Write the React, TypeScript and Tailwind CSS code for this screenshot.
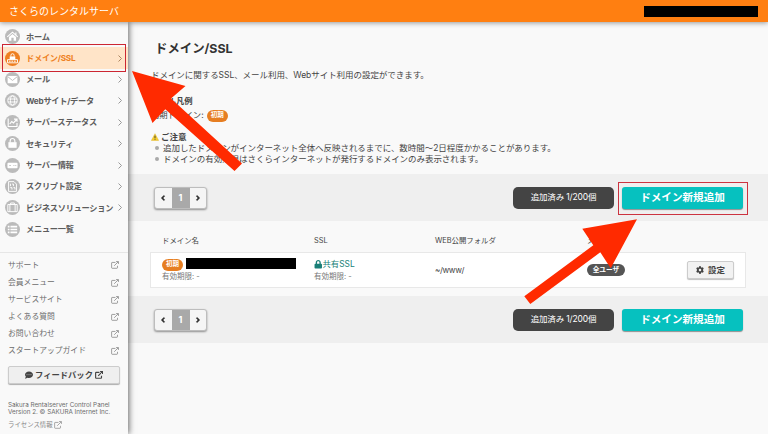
import React from 'react';
import {
  FaAngleLeft,
  FaAngleRight,
  FaCog,
  FaCommentDots,
  FaLock,
} from 'react-icons/fa';

interface MenuItem {
  label: string;
  icon: React.ReactNode;
  arrow?: boolean;
  active?: boolean;
}

const Glyph: React.FC<{ children: React.ReactNode }> = ({ children }) => (
  <svg viewBox="0 0 16 16" className="size-[15px]" fill="none" stroke="#fff" strokeWidth="1">
    {children}
  </svg>
);

const menuItems: MenuItem[] = [
  {
    label: 'ホーム',
    icon: (
      <Glyph>
        <path d="M2.4 8.4 8 3.4l5.6 5M11.6 3.6v2.8" strokeWidth="1.2" />
        <path d="M4.2 8.4 8 5.2l3.8 3.2v4H9.2V9.2H6.8v3.2H4.2z" fill="#fff" stroke="none" />
      </Glyph>
    ),
  },
  {
    label: 'ドメイン/SSL',
    arrow: true,
    active: true,
    icon: (
      <Glyph>
        <path d="M6.3 6V4.6a1.7 1.7 0 0 1 3.4 0V6" />
        <path d="M5 5.8h6v3.4H5z" fill="#fff" stroke="none" />
        <path d="M2.7 9.2h10.6v3.4H2.7z" />
        <path d="M4.2 10.9h7.8" strokeDasharray="1.8 .9" />
      </Glyph>
    ),
  },
  {
    label: 'メール',
    arrow: true,
    icon: (
      <Glyph>
        <path d="M2.8 4.2h10.4v7.8H2.8z" fill="#fff" stroke="none" />
        <path d="m3 5 5 4 5-4" stroke="#bbb" />
      </Glyph>
    ),
  },
  {
    label: 'Webサイト/データ',
    arrow: true,
    icon: (
      <Glyph>
        <circle cx="8" cy="8" r="5" />
        <ellipse cx="8" cy="8" rx="2.2" ry="5" />
        <path d="M3 6.4h10M3 9.6h10" />
      </Glyph>
    ),
  },
  {
    label: 'サーバーステータス',
    arrow: true,
    icon: (
      <Glyph>
        <path d="M3.4 3.8v8.4h9.4V8.4" strokeWidth="1.2" />
        <path d="M5 9.6 7.2 7l1.8 1.5 3.4-3.7M9.6 4.4h3.2v2.8" strokeWidth="1.2" />
      </Glyph>
    ),
  },
  {
    label: 'セキュリティ',
    arrow: true,
    icon: (
      <Glyph>
        <path d="M5.5 7V5.2a2.5 2.5 0 0 1 5 0V7" strokeWidth="1.2" />
        <path d="M3.6 6.6h8.8v6H3.6z" fill="#fff" stroke="none" />
      </Glyph>
    ),
  },
  {
    label: 'サーバー情報',
    arrow: true,
    icon: (
      <Glyph>
        <rect x="2.6" y="5" width="10.8" height="5.8" rx="1" fill="#fff" stroke="none" />
        <path d="M4.6 8h1.6M9 8h1M11 8h1" stroke="#bbb" />
      </Glyph>
    ),
  },
  {
    label: 'スクリプト設定',
    arrow: true,
    icon: (
      <Glyph>
        <path d="M3.8 2.8h5.8L12.2 5.4v7.8H3.8z" />
        <path d="M5.8 5v2.6M7.6 5.4h1.4v2.2M5.6 9.2h1.8v2M9 9.2h1.6v2" />
      </Glyph>
    ),
  },
  {
    label: 'ビジネスソリューション',
    arrow: true,
    icon: (
      <Glyph>
        <path d="M3 4.8h10v7.6H3zM6 4.8V3.2h4v1.6M5.2 4.8v7.6M10.8 4.8v7.6" />
      </Glyph>
    ),
  },
  {
    label: 'メニュー一覧',
    icon: (
      <Glyph>
        <path d="M3 5h1.8M5.8 5H13M3 8h1.8M5.8 8H13M3 11h1.8M5.8 11H13" strokeWidth="1.8" />
      </Glyph>
    ),
  },
];

const supportLinks = [
  'サポート',
  '会員メニュー',
  'サービスサイト',
  'よくある質問',
  'お問い合わせ',
  'スタートアップガイド',
];

const ExternalIcon: React.FC<{ className?: string }> = ({ className }) => (
  <svg viewBox="0 0 9 9" className={`shrink-0 ${className}`} fill="none" stroke="currentColor">
    <path d="M5 1.6H1.3a.6.6 0 0 0-.6.6v5.4c0 .3.3.6.6.6h5.4c.3 0 .6-.3.6-.6V5.4" />
    <path d="M3.6 5.4 8 1M5.7.6h2.7v2.7" />
  </svg>
);

const Pager: React.FC = () => (
  <div className="flex h-[22px] w-[53px] overflow-hidden rounded-[3px] border border-[#bdbdbd] bg-[#f5f5f5] text-[9px] text-[#333] shadow-[0_1px_2px_rgba(0,0,0,0.4)]">
    <div className="flex flex-1 items-center justify-center"><FaAngleLeft size={8} strokeWidth={30} stroke="currentColor" /></div>
    <div className="flex w-[18px] items-center justify-center bg-[#a9a9a9] font-bold text-white">1</div>
    <div className="flex flex-1 items-center justify-center"><FaAngleRight size={8} strokeWidth={30} stroke="currentColor" /></div>
  </div>
);

const ActionBar: React.FC<{ highlighted?: boolean }> = ({ highlighted }) => (
  <div className="flex h-[47px] items-center bg-[#efefef] pr-[25px] pl-[26px]">
    <Pager />
    <div className="ml-auto flex h-[22px] w-[101px] items-center justify-center rounded-[5px] bg-[#444] text-[8.5px] tracking-[-0.15px] text-white">
      追加済み 1/200個
    </div>
    <button className="relative ml-2 h-[22px] w-[121px] rounded-[3px] bg-[#06c1bf] text-[10.6px] leading-[22px] font-bold text-white shadow-[0_1px_1px_rgba(0,0,0,0.4)]">
      ドメイン新規追加
      {highlighted && <span className="absolute -top-[5px] -right-[5px] -bottom-[6px] -left-[4px] border border-[#cc3340]" />}
    </button>
  </div>
);

const Sidebar: React.FC = () => (
  <aside className="relative z-10 flex w-32 shrink-0 flex-col bg-[#f9f9f9] shadow-[1px_0_6px_rgba(0,0,0,0.6)]">
    <nav className="border-b border-[#e6e6e6] pt-1 pb-3">
      {menuItems.map((item) => (
        <div
          key={item.label}
          className={`relative flex h-[21.4px] items-center pr-[6px] pl-[5px] ${item.active ? 'bg-[#ffe4c8] text-[#ee7f20]' : 'text-[#5c5c5c]'}`}
        >
          <span className={`flex size-[15px] shrink-0 items-center justify-center rounded-full ${item.active ? 'bg-[#ee7f20]' : 'bg-[#bbb]'}`}>
            {item.icon}
          </span>
          <span className="ml-[6px] text-[8.2px] font-bold tracking-[-0.25px] whitespace-nowrap">{item.label}</span>
          {item.arrow && (
            <svg viewBox="0 0 4 7" className="ml-auto h-[7px] w-[4px] shrink-0" fill="none" stroke={item.active ? '#ad8660' : '#999'}>
              <path d="m.5.5 3 3-3 3" />
            </svg>
          )}
          {item.active && <span className="absolute -top-[3px] -bottom-[3px] left-[2px] w-[124px] border-[1.5px] border-[#cc2632]" />}
        </div>
      ))}
    </nav>
    <ul className="px-2 pt-1 text-[7.8px] text-[#6c6c6c]">
      {supportLinks.map((label) => (
        <li key={label} className="flex h-[17.1px] items-center justify-between pr-px">
          <span className="whitespace-nowrap">{label}</span>
          <ExternalIcon className="size-[8px] stroke-[0.9] text-[#888]" />
        </li>
      ))}
    </ul>
    <button className="mx-2 mt-[7px] flex h-[18px] items-center justify-center gap-[2px] rounded-[2px] border border-[#ccc] bg-[#efefef] text-[8.3px] font-bold text-[#444] shadow-[0_1px_1px_rgba(0,0,0,0.3)]">
      <FaCommentDots size={8} />
      <span>フィードバック</span>
      <ExternalIcon className="size-[8px] stroke-[1.3]" />
    </button>
    <div className="mt-[18px] px-2 text-[6.3px] leading-[6.5px] whitespace-nowrap text-[#6c6c6c]">
      <p className="h-[7px]">Sakura Rentalserver Control Panel</p>
      <p className="h-[7px]">Version 2. © SAKURA Internet Inc.</p>
    </div>
    <div className="mt-[4px] flex items-center gap-px px-2 text-[6.4px] leading-[10px] text-[#888]">
      ライセンス情報
      <ExternalIcon className="size-2 stroke-[0.8]" />
    </div>
  </aside>
);

const Badge: React.FC = () => (
  <span className="flex h-[12px] w-[21px] items-center justify-center rounded-full bg-[#e67e22] text-[6.5px] leading-none font-bold text-white">
    初期
  </span>
);

const columns = 'grid grid-cols-[152px_121px_152px_1fr]';

const DomainTable: React.FC = () => (
  <div className="mr-[22px] ml-[22px]">
    <div className={`${columns} h-[31px] items-center pt-[9px] pl-[12px] text-[7.4px] text-[#444]`}>
      <span>ドメイン名</span>
      <span>SSL</span>
      <span>WEB公開フォルダ</span>
      <span>メール利用</span>
    </div>
    <div className={`${columns} h-[36px] items-center border border-[#e8e8e8] bg-white pl-[11px] text-[#444]`}>
      <div>
        <div className="flex h-[13px] items-center gap-[3px]">
          <Badge />
          <span className="mb-[2px] h-[11px] w-[110px] bg-black" />
        </div>
        <div className="text-[7.5px] leading-[11px] text-[#777]">有効期限: -</div>
      </div>
      <div>
        <div className="flex h-[13px] items-center text-[8.4px] text-[#197f78]">
          <FaLock size={8.5} />
          共有SSL
        </div>
        <div className="text-[7.5px] leading-[11px] text-[#777]">有効期限: -</div>
      </div>
      <div className="text-[8.2px] tracking-[-0.4px]">~/www/</div>
      <div className="flex items-center justify-between pr-[11px]">
        <span className="flex h-[12px] w-[38px] items-center justify-center rounded-full bg-[#555] text-[6.7px] font-bold text-white">
          全ユーザ
        </span>
        <button className="flex h-[18px] w-[47px] items-center justify-center gap-1 rounded-[2px] border border-[#ccc] bg-[#f2f2f2] text-[8.5px] font-bold shadow-[0_1px_1px_rgba(0,0,0,0.25)]">
          <FaCog size={8} />
          設定
        </button>
      </div>
    </div>
  </div>
);

const PageIntro: React.FC = () => (
  <section className="h-[152px] pt-[17px] pl-[23px] text-[8.5px] whitespace-nowrap text-[#444]">
    <h1 className="pl-1 text-[12.4px] leading-5 font-bold text-[#333]">ドメイン/SSL</h1>
    <p className="mt-[9px] leading-[14px] tracking-[-0.05px]">ドメインに関するSSL、メール利用、Webサイト利用の設定ができます。</p>
    <h2 className="mt-[12px] text-[8.3px] leading-[14px] font-bold">ラベル凡例</h2>
    <div className="flex h-[15px] items-center gap-[3px] text-[8.4px]">
      初期ドメイン: <Badge />
    </div>
    <div className="mt-[8px] flex h-[12px] items-center gap-[2px] font-bold">
      <svg viewBox="0 0 9 9" className="size-[8px]">
        <path d="M4.5.8 8.6 8.4H.4z" fill="#f7cf2f" stroke="#dfb52a" strokeWidth=".5" />
        <path d="M4.5 3v2.8M4.5 6.5v1" stroke="#333" />
      </svg>
      ご注意
    </div>
    <ul className="pl-[4px] leading-[10.7px] tracking-[-0.05px]">
      <li className="flex items-center gap-[4px]">
        <span className="size-[4px] rounded-full bg-[#aaa]" />
        <span>追加したドメインがインターネット全体へ反映されるまでに、数時間〜2日程度かかることがあります。</span>
      </li>
      <li className="flex items-center gap-[4px]">
        <span className="size-[4px] rounded-full bg-[#aaa]" />
        <span>ドメインの有効期限はさくらインターネットが発行するドメインのみ表示されます。</span>
      </li>
    </ul>
  </section>
);

export default function App() {
  return (
    <div className="relative flex h-[434px] w-[768px] flex-col overflow-hidden bg-[#f9f9f9] font-['Inter','Noto_Sans_CJK_JP',sans-serif]">
      <header className="z-20 flex h-[22px] shrink-0 items-center justify-between bg-[#ff7f11] pr-[10px] pl-[9px] text-[10px] text-white shadow-[0_1px_5px_rgba(0,0,0,0.4)]">
        <span>さくらのレンタルサーバ</span>
        <span className="mt-[1px] h-[11px] w-[114px] bg-black" />
      </header>
      <div className="flex flex-1">
        <Sidebar />
        <main className="min-w-0 flex-1">
          <PageIntro />
          <ActionBar highlighted />
          <DomainTable />
          <div className="h-2" />
          <ActionBar />
        </main>
      </div>

      {/* Callout arrows laid over the page */}
      <svg className="pointer-events-none absolute inset-0 z-30" width="768" height="434" fill="#ff2a00">
        <path d="M132 71 185.5 86 171 98.5 242 163.5 234.5 171 165.3 109.3 152.5 123z" />
        <path d="M637 219.3 610.7 268.3 600.3 252.3 530.3 304 524.3 296.3 593.3 245.3 582.3 228.7z" />
      </svg>
    </div>
  );
}
